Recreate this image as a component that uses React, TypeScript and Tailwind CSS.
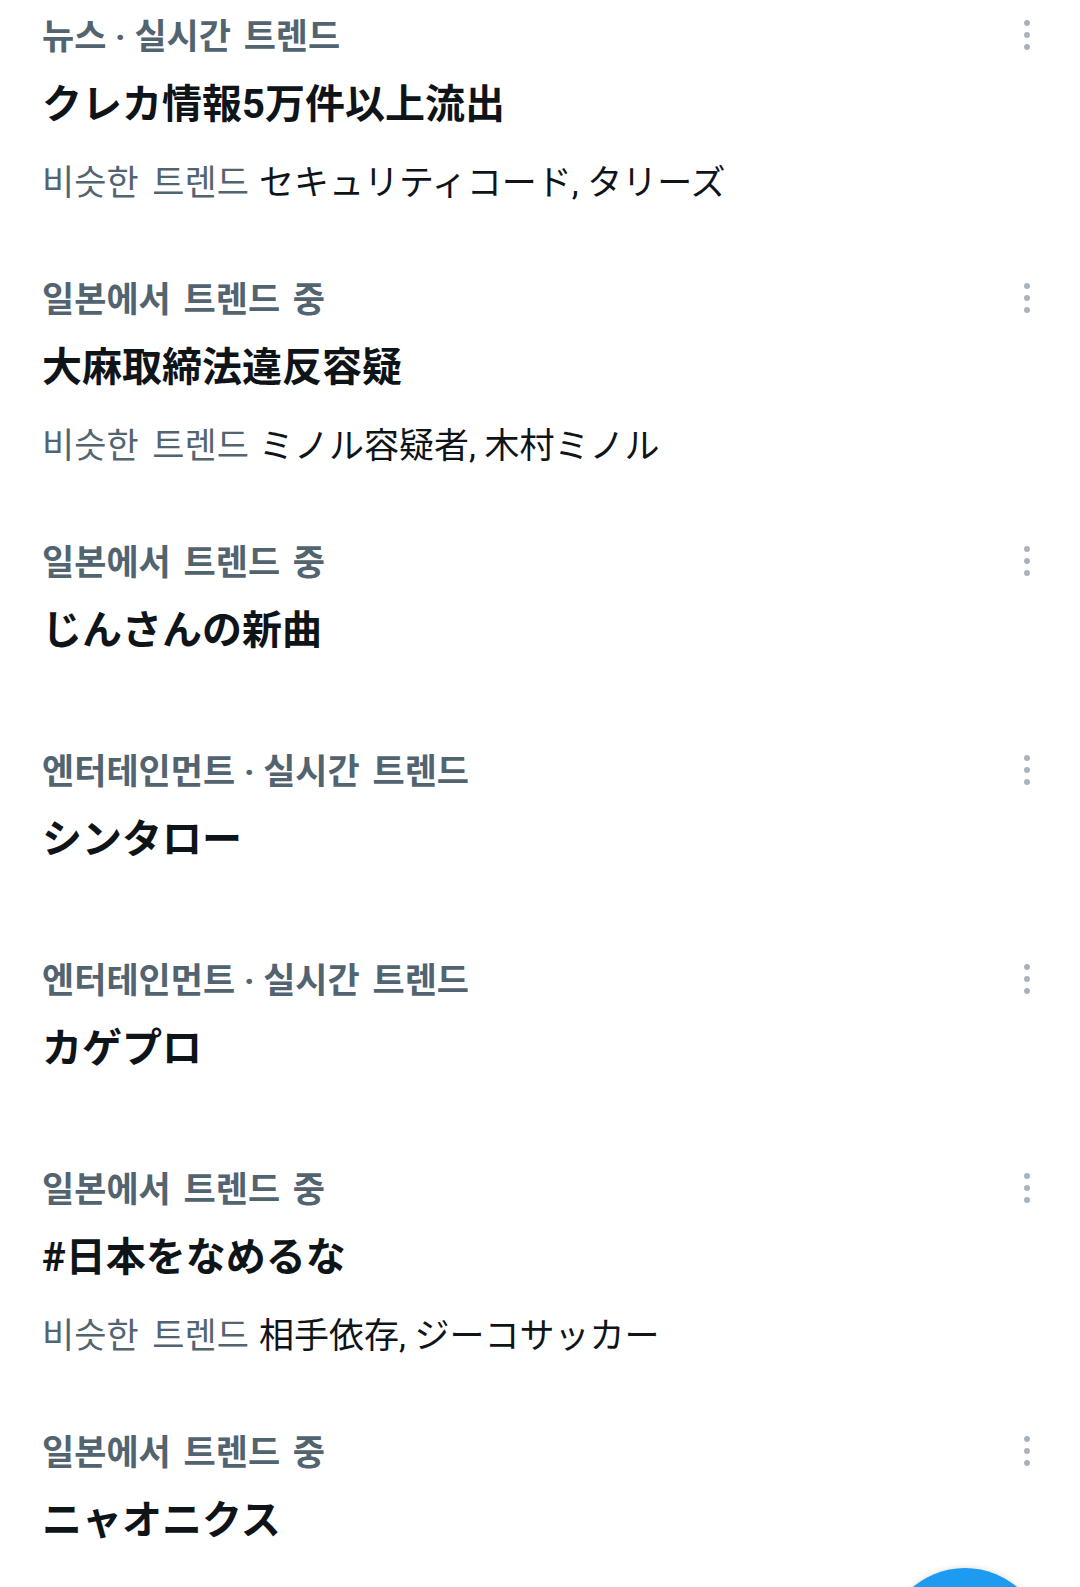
import React from 'react';

type Trend = {
  category: string;
  title: string;
  similar?: string;
};

const trends: Trend[] = [
  { category: '뉴스 · 실시간 트렌드', title: 'クレカ情報5万件以上流出', similar: 'セキュリティコード, タリーズ' },
  { category: '일본에서 트렌드 중', title: '大麻取締法違反容疑', similar: 'ミノル容疑者, 木村ミノル' },
  { category: '일본에서 트렌드 중', title: 'じんさんの新曲' },
  { category: '엔터테인먼트 · 실시간 트렌드', title: 'シンタロー' },
  { category: '엔터테인먼트 · 실시간 트렌드', title: 'カゲプロ' },
  { category: '일본에서 트렌드 중', title: '#日本をなめるな', similar: '相手依存, ジーコサッカー' },
  { category: '일본에서 트렌드 중', title: 'ニャオニクス' },
];

const KR = '[font-family:Roboto,"Noto_Sans_CJK_KR",sans-serif]';
const JP = '[font-family:Roboto,"Noto_Sans_CJK_JP",sans-serif]';

const MoreDots: React.FC = () => (
  <div className="flex flex-col items-center gap-[6px] -mt-[3px]">
    <span className="block w-[6px] h-[6px] rounded-full bg-[#aab3bb]" />
    <span className="block w-[6px] h-[6px] rounded-full bg-[#aab3bb]" />
    <span className="block w-[6px] h-[6px] rounded-full bg-[#aab3bb]" />
  </div>
);

// Category label: the middle dot keeps its plain spaces, words get a little extra
const Category: React.FC<{ text: string }> = ({ text }) => {
  const parts = text.split(' · ');
  return (
    <span className={`block pt-1 text-[35px] font-bold text-[#536471] leading-9 whitespace-pre ${KR}`}>
      {parts.map((part, i) => (
        <React.Fragment key={i}>
          {i > 0 && <span> · </span>}
          <span className="[word-spacing:4px]">{part}</span>
        </React.Fragment>
      ))}
    </span>
  );
};

const TrendItem: React.FC<{ trend: Trend }> = ({ trend }) => (
  <div className={`pt-4 ${trend.similar ? 'pb-[57px]' : 'pb-[78px]'}`}>
    {/* Category row with overflow menu */}
    <div className="flex items-center justify-between h-10 pr-[50px]">
      <Category text={trend.category} />
      <MoreDots />
    </div>

    {/* Trend title */}
    <div className={`mt-[23px] h-[52px] leading-[52px] text-[40px] font-bold text-[#0f1419] ${JP}`}>
      {trend.title}
    </div>

    {/* Similar trends */}
    {trend.similar && (
      <div className="mt-[31px] h-11 leading-[44px] flex items-baseline whitespace-nowrap">
        <span className={`text-[35px] text-[#536471] [word-spacing:5px] ${KR}`}>비슷한 트렌드</span>
        <span className={`ml-[10px] text-[35px] text-[#0f1419] ${JP}`}>{trend.similar}</span>
      </div>
    )}
  </div>
);

export default function App() {
  return (
    <div className="relative w-[1080px] h-[1587px] overflow-hidden bg-white pl-[42px]">
      {trends.map((trend, i) => (
        <TrendItem key={i} trend={trend} />
      ))}

      {/* Floating compose button, cut off by the screen edge */}
      <div className="absolute left-[884px] top-[1568px] w-[162px] h-[162px] rounded-full bg-[#1d9bf0] shadow-[0_0_6px_rgba(0,0,0,0.15)]" />
    </div>
  );
}
